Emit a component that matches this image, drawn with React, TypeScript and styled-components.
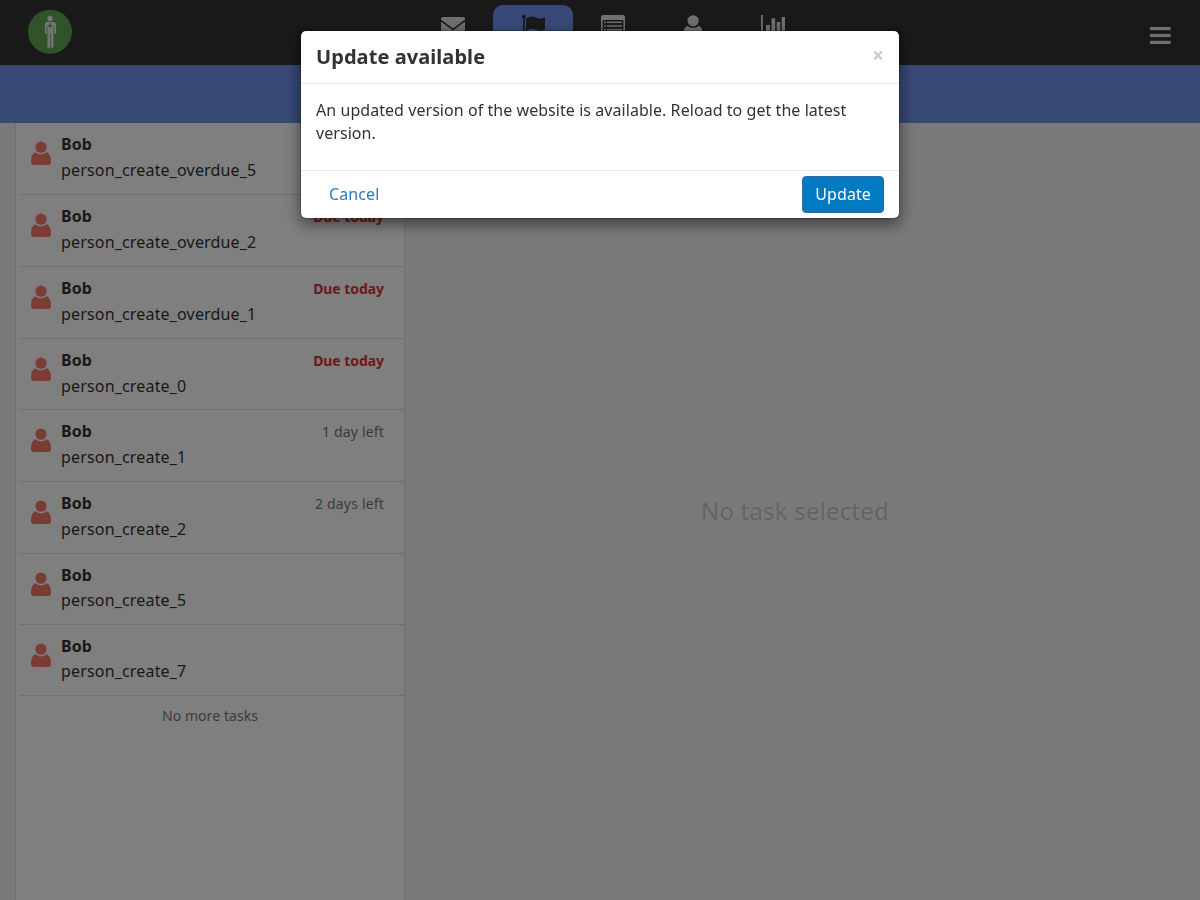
import React from 'react';
import styled, { createGlobalStyle } from 'styled-components';

const GlobalStyle = createGlobalStyle`
  *, *::before, *::after { box-sizing: border-box; }
  body {
    margin: 0;
    background: #f2f2f2;
    color: #333;
    font: 16px/1.42857 "Noto Sans", sans-serif;
  }
  button { font: inherit; cursor: pointer; }
`;

const Page = styled.div`
  height: 100vh;
  display: flex;
  flex-direction: column;
  overflow: hidden;
`;

const Header = styled.header`
  flex: none;
  height: 65px;
  display: grid;
  grid-template-columns: 1fr auto 1fr;
  background: #333;
`;

const Logo = styled.div`
  padding: 9px 0 0 27px;
  svg { display: block; }
`;

const Tabs = styled.nav`
  display: flex;
  padding: 5px 0 0 26px;
`;

const Tab = styled.a<{ $active?: boolean }>`
  width: 80px;
  height: 60px;
  display: flex;
  justify-content: center;
  padding-top: 9px;
  border-radius: 10px 10px 0 0;
  background: ${(p) => (p.$active ? '#7193ee' : 'transparent')};
  color: ${(p) => (p.$active ? '#333' : '#e0e0e0')};
`;

const MenuButton = styled.button`
  justify-self: end;
  align-self: start;
  margin: 25px 28px 0 0;
  padding: 0;
  border: 0;
  background: none;
  color: #e0e0e0;
  svg { display: block; }
`;

const ActionBar = styled.div`
  flex: none;
  height: 58px;
  background: #7193ee;
`;

const Content = styled.main`
  flex: 1;
  min-height: 0;
  display: flex;
  padding-left: 15px;
`;

const TaskList = styled.section`
  width: 390px;
  flex: none;
  background: #fff;
  border: solid #e0e0e0;
  border-width: 0 1px;
`;

const TaskRow = styled.div<{ $due: boolean }>`
  height: ${(p) => (p.$due ? 71.85 : 71)}px;
  margin-left: 3px;
  padding: 10px 20px 0 12px;
  display: flex;
  border-bottom: 1px solid #e0e0e0;
`;

const TaskIcon = styled.svg`
  flex: none;
  margin: 8px 10px 0 0;
  fill: #f47b6b;
`;

const TaskText = styled.div`
  flex: 1;
`;

const TaskHeading = styled.div<{ $due: boolean }>`
  display: flex;
  justify-content: space-between;
  height: ${(p) => (p.$due ? 26 : 25.1)}px;
  font-weight: 700;
`;

const TaskTitle = styled.div`
  letter-spacing: 0.17px;
`;

const Due = styled.span<{ $overdue: boolean }>`
  padding-top: 2px;
  font-size: 14px;
  font-weight: ${(p) => (p.$overdue ? 700 : 400)};
  letter-spacing: ${(p) => (p.$overdue ? -0.06 : 0.18)}px;
  color: ${(p) => (p.$overdue ? '#e33030' : '#777')};
`;

const ListEnd = styled.p`
  margin: 10px 0 0;
  font-size: 14px;
  letter-spacing: 0.08px;
  text-align: center;
  color: #777;
`;

const Detail = styled.section`
  flex: 1;
  display: flex;
  align-items: center;
  justify-content: center;
  padding-right: 15px;
  font-size: 24px;
  letter-spacing: 0.2px;
  color: #c8c8c8;
  text-shadow: 1px 1px 3px #fff;
`;

const Overlay = styled.div`
  position: fixed;
  inset: 0;
  padding-top: 30px;
  background: rgba(0, 0, 0, 0.5);
`;

const Dialog = styled.div`
  width: 600px;
  margin: 0 auto;
  background: #fff;
  background-clip: padding-box;
  border: 1px solid rgba(0, 0, 0, 0.2);
  border-radius: 6px;
  box-shadow: 0 5px 15px rgba(0, 0, 0, 0.5);
`;

const DialogHeader = styled.div`
  height: 53px;
  display: flex;
  justify-content: space-between;
  padding: 12px 15px 0;
  border-bottom: 1px solid #e5e5e5;
`;

const DialogTitle = styled.h2`
  margin: 0;
  font-size: 20px;
  line-height: 28px;
  letter-spacing: 0.07px;
`;

const CloseButton = styled.button`
  height: 20px;
  margin-top: 2px;
  padding: 0;
  border: 0;
  background: none;
  font-size: 21px;
  font-weight: 700;
  line-height: 20px;
  color: #ccc;
`;

const DialogBody = styled.div`
  height: 86px;
  padding: 15px;
  letter-spacing: 0.055px;
`;

const DialogFooter = styled.div`
  height: 48px;
  display: flex;
  justify-content: space-between;
  padding: 5px 15px;
  border-top: 1px solid #e5e5e5;
`;

const Button = styled.button<{ $primary?: boolean }>`
  height: 37px;
  padding: 6px 12px;
  line-height: 22.85px;
  letter-spacing: 0.1px;
  border: 1px solid ${(p) => (p.$primary ? '#2e6da4' : 'transparent')};
  border-radius: 4px;
  background: ${(p) => (p.$primary ? '#007ac0' : 'transparent')};
  color: ${(p) => (p.$primary ? '#fff' : '#337ab7')};
`;

const tasks = [
  { title: 'person_create_overdue_5', due: 'Due today' },
  { title: 'person_create_overdue_2', due: 'Due today' },
  { title: 'person_create_overdue_1', due: 'Due today' },
  { title: 'person_create_0', due: 'Due today' },
  { title: 'person_create_1', due: '1 day left' },
  { title: 'person_create_2', due: '2 days left' },
  { title: 'person_create_5', due: '' },
  { title: 'person_create_7', due: '' },
];

const PersonShape = () => (
  <>
    <circle cx="10" cy="6.2" r="5.6" />
    <path d="M4.6 11.300Q6.600 13.400 10 13.400t5.400-2.100Q20 12.600 20 20.800q0 3.200-2.800 3.200H2.800Q0 24 0 20.800 0 12.600 4.600 11.300z" />
  </>
);

const LogoMark = () => (
  <svg width="46" height="46" viewBox="0 0 46 46">
    <circle cx="23" cy="22.800" r="22" fill="#63a655" />
    <g fill="#e8e8e8">
      <circle cx="23" cy="9.500" r="2.700" />
      <path d="M20 13h6q3 0 3 3v8.200q0 .9-.9.900t-.9-.900V16.800h-.7V37.500q0 1.400-1.300 1.400t-1.400-1.400V25h-.7v12.500q0 1.400-1.400 1.400t-1.300-1.400V16.800h-.7v7.400q0 .9-.9.900t-.9-.900V16q0-3 2.200-3z" />
    </g>
    <path d="M22.300 14.500h1.500v1.400h1.400v1.400h-1.400v1.400h-1.500v-1.400h-1.400v-1.400h1.400z" fill="#63a655" />
  </svg>
);

export default function App() {
  return (
    <>
      <GlobalStyle />
      <Page>
        <Header>
          <Logo>
            <LogoMark />
          </Logo>
          <Tabs>
            <Tab>
              <svg width="24" height="24" viewBox="0 0 24 24" fill="currentColor">
                <path d="M1.500 3h21q1.500 0 1.500 1.500v1L12 14.500 0 5.500v-1Q0 3 1.500 3zM0 7.500l12 9 12-9V19q0 2-2 2H2q-2 0-2-2z" />
              </svg>
            </Tab>
            <Tab $active>
              <svg width="24" height="24" viewBox="0 0 24 24" fill="currentColor">
                <circle cx="2.800" cy="2.600" r="1.900" />
                <path d="M2.100 2h1.700v22H2.100zM5 4.800c4.500-2.800 7.500-2.600 10.500-1.100s5.500.8 8.500-.8v12.500c-3.500 1.800-6 1.600-9 .2s-6-1-10 1.300z" />
              </svg>
            </Tab>
            <Tab>
              <svg width="24" height="24" viewBox="0 0 24 24" fill="currentColor" fillRule="evenodd">
                <path d="M2 1h20q2 0 2 2v18q0 2-2 2H2q-2 0-2-2V3q0-2 2-2zM1.600 6v14.700h20.800V6zM3 7.500h2v1.500H3zm3 0h15v1.500H6zM3 11.200h2v1.500H3zm3 0h15v1.500H6zM3 14.900h2v1.500H3zm3 0h15v1.500H6z" />
              </svg>
            </Tab>
            <Tab>
              <svg width="20" height="24" viewBox="0 0 20 24" fill="currentColor">
                <g transform="translate(.1 .6)">
                  <PersonShape />
                </g>
              </svg>
            </Tab>
            <Tab>
              <svg width="24" height="24" viewBox="0 0 24 24" fill="currentColor">
                <path d="M0 1h1.800v20H24v1.700H0zM5 11h4v9H5zM10.500 4.200h3.700V20h-3.700zM15.700 8h3.500v12h-3.500zM20.700 3H24v17h-3.300z" />
              </svg>
            </Tab>
          </Tabs>
          <MenuButton aria-label="Menu">
            <svg width="22" height="20" viewBox="0 0 22 20" fill="currentColor">
              <rect y="2" width="20.600" height="3.200" />
              <rect y="8.900" width="20.600" height="3.200" />
              <rect y="15.800" width="20.600" height="3.200" />
            </svg>
          </MenuButton>
        </Header>
        <ActionBar />
        <Content>
          <TaskList>
            {tasks.map((task) => (
              <TaskRow key={task.title} $due={!!task.due}>
                <TaskIcon width="20" height="25" viewBox="0 0 20 25">
                  <PersonShape />
                </TaskIcon>
                <TaskText>
                  <TaskHeading $due={!!task.due}>
                    <span>Bob</span>
                    {task.due && <Due $overdue={task.due === 'Due today'}>{task.due}</Due>}
                  </TaskHeading>
                  <TaskTitle>{task.title}</TaskTitle>
                </TaskText>
              </TaskRow>
            ))}
            <ListEnd>No more tasks</ListEnd>
          </TaskList>
          <Detail>No task selected</Detail>
        </Content>
      </Page>
      <Overlay>
        <Dialog role="dialog" aria-modal="true">
          <DialogHeader>
            <DialogTitle>Update available</DialogTitle>
            <CloseButton aria-label="Close">×</CloseButton>
          </DialogHeader>
          <DialogBody>
            An updated version of the website is available. Reload to get the latest version.
          </DialogBody>
          <DialogFooter>
            <Button>Cancel</Button>
            <Button $primary>Update</Button>
          </DialogFooter>
        </Dialog>
      </Overlay>
    </>
  );
}
